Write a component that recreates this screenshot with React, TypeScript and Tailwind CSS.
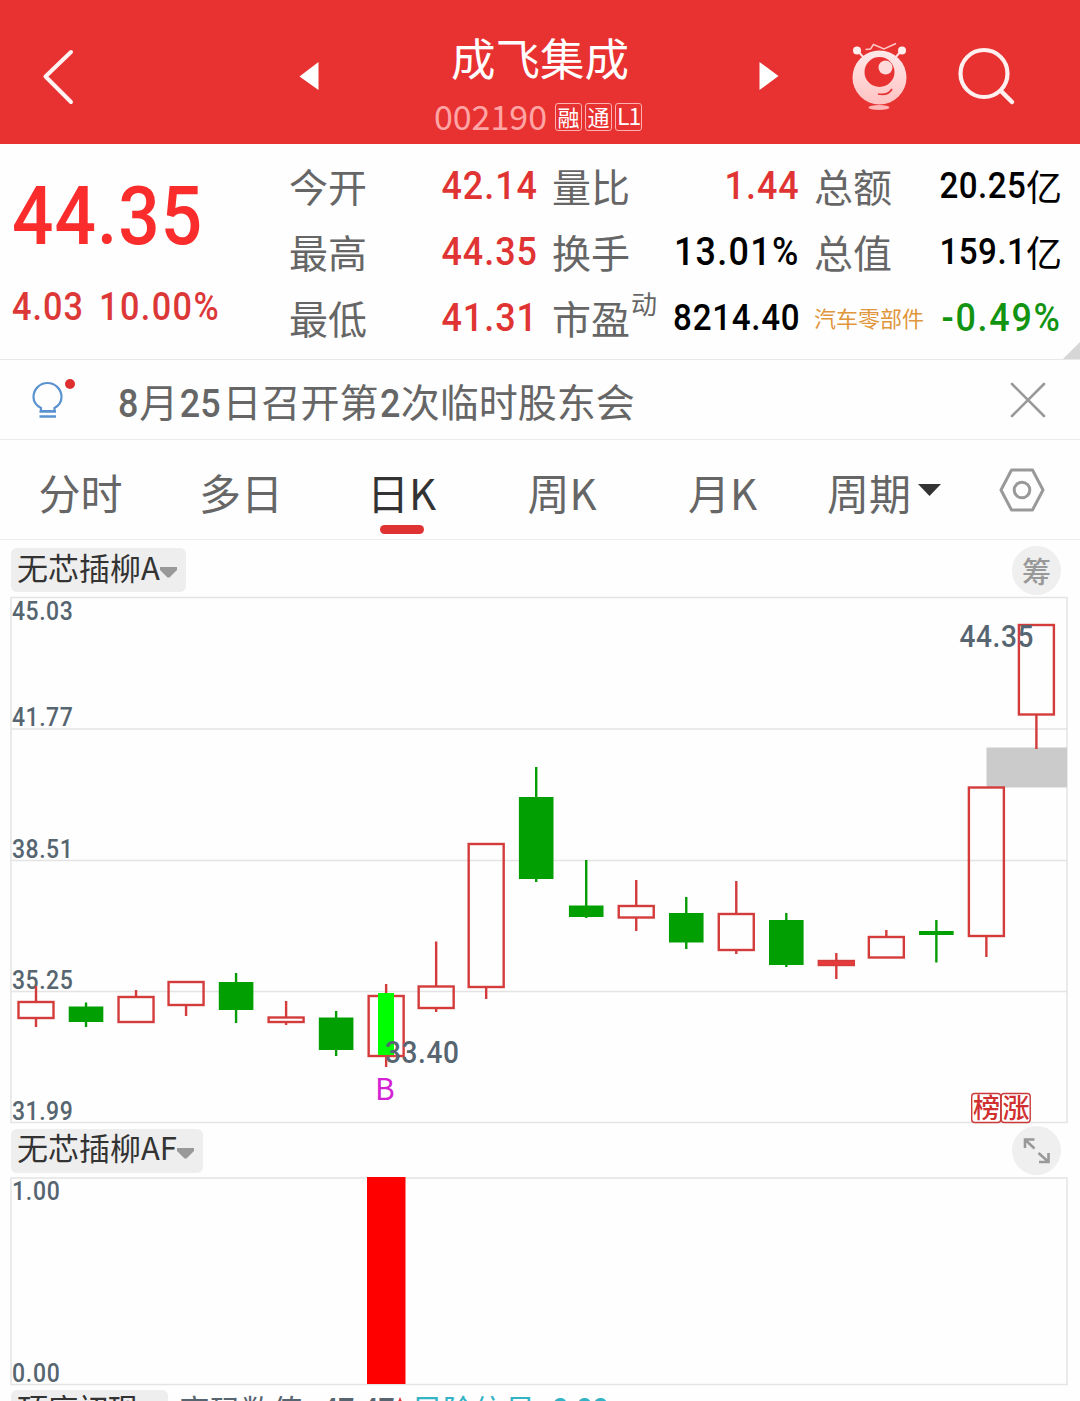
interface Quote {
  label: string
  sup?: string
  value: string
  unit?: string
  tone: string
  size: string
}

interface Candle {
  up: boolean
  top: number
  bottom: number
  high: number
  low: number
}

const quotes: Quote[] = [
  { label: '今开', value: '42.14', tone: 'text-[#e03434]', size: 'text-[39px] tracking-[1.1px]' },
  { label: '量比', value: '1.44', tone: 'text-[#e03434]', size: 'text-[39px] tracking-[1.1px]' },
  { label: '总额', value: '20.25', unit: '亿', tone: 'text-black', size: 'text-[36px] tracking-[0.5px]' },
  { label: '最高', value: '44.35', tone: 'text-[#e03434]', size: 'text-[39px] tracking-[1.1px]' },
  { label: '换手', value: '13.01%', tone: 'text-black', size: 'text-[39px] tracking-[1.4px]' },
  { label: '总值', value: '159.1', unit: '亿', tone: 'text-black', size: 'text-[36px] tracking-[0.5px]' },
  { label: '最低', value: '41.31', tone: 'text-[#e03434]', size: 'text-[39px] tracking-[1.1px]' },
  { label: '市盈', sup: '动', value: '8214.40', tone: 'text-black', size: 'text-[36px] tracking-[0.8px]' },
]

const tabs = [
  { name: '分时', width: 'w-[161px]' },
  { name: '多日', width: 'w-[160px]' },
  { name: '日K', width: 'w-[161px]', active: true },
  { name: '周K', width: 'w-[160px]' },
  { name: '月K', width: 'w-[161px]' },
]

// pixel rows inside the price panel
const candles: Candle[] = [
  { up: true, top: 1001, bottom: 1019, high: 986, low: 1027 },
  { up: false, top: 1006.5, bottom: 1022, high: 1002.5, low: 1027 },
  { up: true, top: 996, bottom: 1023, high: 990, low: 1023 },
  { up: true, top: 981, bottom: 1006, high: 981, low: 1016 },
  { up: false, top: 982, bottom: 1010, high: 973, low: 1023 },
  { up: true, top: 1016.5, bottom: 1023, high: 1001, low: 1025 },
  { up: false, top: 1017.5, bottom: 1050, high: 1011, low: 1056 },
  { up: true, top: 995, bottom: 1057, high: 984, low: 1067 },
  { up: true, top: 985.5, bottom: 1009, high: 941.5, low: 1012 },
  { up: true, top: 843, bottom: 988, high: 843, low: 999 },
  { up: false, top: 797, bottom: 879, high: 767, low: 882 },
  { up: false, top: 905.5, bottom: 917, high: 860, low: 918 },
  { up: true, top: 905, bottom: 918.5, high: 880, low: 931 },
  { up: false, top: 913, bottom: 942.5, high: 897, low: 949 },
  { up: true, top: 913, bottom: 951, high: 881, low: 954 },
  { up: false, top: 920, bottom: 965, high: 913, low: 967 },
  { up: true, top: 960, bottom: 966, high: 953, low: 979 },
  { up: true, top: 936, bottom: 958.5, high: 930, low: 958 },
  { up: false, top: 931, bottom: 935, high: 920, low: 962.5 },
  { up: true, top: 786.5, bottom: 937, high: 787, low: 957 },
  { up: true, top: 624, bottom: 715.5, high: 624, low: 749 },
]

const axis = [
  { text: '45.03', y: 620 },
  { text: '41.77', y: 726 },
  { text: '38.51', y: 858 },
  { text: '35.25', y: 989 },
  { text: '31.99', y: 1120 },
]

function Header() {
  return (
    <header className="relative flex h-36 justify-center bg-[#e83131] text-white">
      <div className="flex flex-col items-center pr-1">
        <h1 className="ml-1 mt-[35px] text-[44.5px] leading-[44px]">成飞集成</h1>
        <div className="mt-[19px] flex items-center">
          <span className="text-[34px] leading-9 text-[#ffa5a5]">002190</span>
          <div className="ml-2 mt-px flex gap-[3px] text-[22px]">
            <span className="flex h-7 w-[27px] items-center justify-center rounded-[3px] border border-[#ffb0b0] pb-[2px] leading-none">融</span>
            <span className="flex h-7 w-[27px] items-center justify-center rounded-[3px] border border-[#ffb0b0] pb-[2px] leading-none">通</span>
            <span className="flex h-7 w-[27px] items-center justify-center rounded-[3px] border border-[#ffb0b0] pb-[2px] text-[23px] leading-none tracking-[-1px]">L1</span>
          </div>
        </div>
      </div>
      <svg className="absolute inset-0" width="1080" height="144" viewBox="0 0 1080 144" fill="none">
        <defs>
          <linearGradient id="face" x1="0" y1="0" x2="0" y2="1">
            <stop offset="0" stopColor="#ffe9e9" />
            <stop offset="1" stopColor="#ffc2c2" />
          </linearGradient>
        </defs>
        <path d="M71 52 L45.5 76.5 L71 102" stroke="#fff2f2" strokeWidth="4" strokeLinecap="round" strokeLinejoin="round" />
        <path d="M299.500 76.500 L318.500 62 V90 Z" fill="#fff" />
        <path d="M778.500 76 L759.500 62 V90 Z" fill="#fff" />
        {/* mascot */}
        <path d="M858 51 L864 58 M901 51 L895 58" stroke="#ffe0e0" strokeWidth="2" />
        <circle cx="857" cy="50.500" r="4" fill="#fff0f0" />
        <circle cx="902" cy="50.500" r="4" fill="#fff0f0" />
        <path d="M865.500 49.500 L870.500 49 L873.500 44.500 L884 49 L896 43.500" stroke="#ffc6c6" strokeWidth="1.500" />
        <circle cx="879.500" cy="77.500" r="27" fill="url(#face)" />
        <circle cx="879.500" cy="72" r="15" fill="#e83131" />
        <circle cx="885.500" cy="67.500" r="7" fill="#ffdada" />
        <path d="M878 94 Q888 96 892 89" stroke="#e83131" strokeWidth="1.700" />
        <ellipse cx="879" cy="107.500" rx="10.500" ry="2.500" fill="#ffb5b5" />
        <circle cx="984" cy="73.500" r="23.500" stroke="#fff0f0" strokeWidth="4.200" />
        <path d="M1001 91 L1012 102" stroke="#fff0f0" strokeWidth="4.500" strokeLinecap="round" />
      </svg>
    </header>
  )
}

function QuotePanel() {
  return (
    <section className="relative flex h-[216px] border-b border-[#e8e8e8] pt-[10px]">
      <div className="w-[289px] pl-3 font-['Roboto',sans-serif] font-medium">
        <p className="mt-[23px] origin-left scale-x-90 text-[81px] leading-[80px] tracking-[1.2px] text-[#fa2c2c]">44.35</p>
        <p className="mt-[31px] flex gap-[7px] text-[38px] leading-[38px] text-[#dc3838]">
          <span className="origin-left scale-x-90 tracking-[1.2px]">4.03</span>
          <span className="origin-left scale-x-90 tracking-[1.6px]">10.00%</span>
        </p>
      </div>
      <div className="grid h-[198px] grid-cols-[249px_248px_248px] grid-rows-3 gap-x-[14px]">
        {quotes.map((q) => (
          <div key={q.label} className="flex items-center justify-between">
            <span className="-mt-1 flex text-[39px] leading-none text-[#666]">
              {q.label}
              {q.sup && <span className="-mt-2 ml-px text-[26px] leading-none">{q.sup}</span>}
            </span>
            <span className={`-mt-[2px] flex items-center leading-none ${q.size} ${q.tone}`}>
              <span className="origin-right scale-x-92 font-['Roboto',sans-serif] font-medium">{q.value}</span>
              {q.unit && <span className="-mt-[3px] tracking-normal">{q.unit}</span>}
            </span>
          </div>
        ))}
        <div className="flex items-center justify-between">
          <span className="-mt-1 text-[22px] leading-none text-[#e0963c]">汽车零部件</span>
          <span className="-mt-[2px] origin-right scale-x-92 font-['Roboto',sans-serif] text-[39px] font-medium leading-none tracking-[1.9px] text-[#129412]">-0.49%</span>
        </div>
      </div>
      <svg className="absolute bottom-0 right-0" width="17" height="17" viewBox="0 0 17 17">
        <path d="M17 0 V17 H0 Z" fill="#d6d6d6" />
      </svg>
    </section>
  )
}

function NewsBar() {
  return (
    <section className="flex h-20 items-center border-b border-[#ececec]">
      <svg className="ml-7" width="52" height="52" viewBox="28 374 52 52" fill="none">
        <path d="M41 411 V408 Q33.500 404 33.500 397 A14 14 0 0 1 61.500 397 Q61.500 404 54.500 408 V411 Z" stroke="#5b93cf" strokeWidth="2.200" />
        <path d="M39.500 411.500 H56 M39.500 416.500 H56" stroke="#5b93cf" strokeWidth="2.500" />
        <circle cx="70" cy="384" r="5" fill="#df3030" />
      </svg>
      <p className="ml-[37px] mt-[5px] text-[39px] leading-none text-[#666]">
        <Num>8</Num>月<Num>25</Num>日召开第<Num>2</Num>次临时股东会
      </p>
      <svg className="ml-auto mr-[34px]" width="36" height="36" viewBox="0 0 36 36">
        <path d="M2 2 L34 34 M34 2 L2 34" stroke="#999" strokeWidth="2.600" strokeLinecap="round" />
      </svg>
    </section>
  )
}

function Num({ children }: { children: string }) {
  return <span className="inline-block scale-x-92 font-['Roboto',sans-serif] font-medium leading-none">{children}</span>
}

function PeriodTabs() {
  return (
    <nav className="flex h-[100px] items-center border-b border-[#ececec] text-[42px] leading-none text-[#666]">
      {tabs.map((tab) => (
        <div key={tab.name} className={`flex h-full justify-center pt-[31px] ${tab.width}`}>
          <span className={tab.active ? 'relative h-[42px] text-[#333]' : 'h-[42px]'}>
            {tab.name}
            {tab.active && <i className="absolute left-1/2 top-[54px] ml-px h-[9px] w-[44px] -translate-x-1/2 rounded-full bg-[#df3232]" />}
          </span>
        </div>
      ))}
      <div className="ml-6 mt-[4px] flex items-center">
        周期
        <svg className="-mt-1 ml-[7px]" width="23" height="12" viewBox="0 0 23 12">
          <path d="M0 0 H23 L11.500 12 Z" fill="#333" />
        </svg>
      </div>
      <svg className="ml-[57px]" width="48" height="46" viewBox="0 0 48 46" fill="none" stroke="#999">
        <path d="M13.500 3 H34.500 L45 23 L34.500 43 H13.500 L3 23 Z" strokeWidth="3" strokeLinejoin="round" />
        <circle cx="24" cy="23" r="7.800" strokeWidth="3" />
      </svg>
    </nav>
  )
}

function IndicatorTag({ name }: { name: string }) {
  return (
    <span className="flex h-11 items-center rounded-md bg-[#eee] pl-[6px] pr-[9px] text-[31px] leading-none text-[#333]">
      <span className="-mt-2">{name}</span>
      <svg className="mt-1" width="17" height="12" viewBox="0 0 17 12">
        <path d="M0 1 H17 V4 L9.500 11.500 H7.500 L0 4 Z" fill="#999" />
      </svg>
    </span>
  )
}

function PriceChart() {
  return (
    <svg className="block" width="1080" height="530" viewBox="0 596 1080 530" fontFamily="Roboto, sans-serif" fontWeight="500">
      <g fill="none" stroke="#e4e4e4" strokeWidth="1.500">
        <rect x="11" y="597.500" width="1056" height="525" />
        <path d="M11 729 H1067 M11 860.500 H1067 M11 991.500 H1067" />
      </g>
      <rect x="986.500" y="747.500" width="80.500" height="40" fill="#cbcbcb" />
      <g fontSize="25" fill="#566570" transform="translate(12 0) scale(0.92 1)">
        {axis.map((a) => (
          <text key={a.text} x="0" y={a.y} textLength="66">
            {a.text}
          </text>
        ))}
      </g>
      {candles.map((c, i) => {
        const x = 36 + i * 50.02
        const color = c.up ? '#d43c3c' : '#069c06'
        return (
          <g key={i} stroke={color} strokeWidth="2.400">
            <path d={`M${x} ${c.high} V${c.top + 1} M${x} ${c.bottom - 1} V${c.low}`} />
            {c.up ? (
              <rect x={x - 17.5} y={c.top + 1} width="35" height={c.bottom - c.top - 2} fill="none" />
            ) : (
              <rect x={x - 17.3} y={c.top} width="34.600" height={c.bottom - c.top} fill="#029f02" stroke="none" />
            )}
          </g>
        )
      })}
      <path d="M819 963 H854" stroke="#e83a3a" strokeWidth="3" />
      <rect x="378" y="993" width="16" height="62" fill="#00ff00" />
      <g fontSize="30.500" fill="#566570">
        <text transform="translate(385 1063) scale(0.92 1)" textLength="80.500">33.40</text>
        <text transform="translate(959.500 647) scale(0.92 1)" textLength="80.500">44.35</text>
      </g>
      <text x="375" y="1100" fontSize="30" fontWeight="400" fontFamily="Noto Sans CJK SC, sans-serif" fill="#d41fd4">B</text>
      <g fill="#fff" stroke="#c93a3a" strokeWidth="1.400">
        <rect x="971.700" y="1093.500" width="29" height="29" rx="3" />
        <rect x="1001.200" y="1093.500" width="29" height="29" rx="3" />
      </g>
      <g fontSize="27" fill="#d03030" fontFamily="Noto Sans CJK SC, sans-serif">
        <text x="973" y="1118">榜</text>
        <text x="1002.500" y="1118">涨</text>
      </g>
    </svg>
  )
}

function SignalChart() {
  return (
    <svg className="block" width="1080" height="210" viewBox="0 1176 1080 210" fontFamily="Roboto, sans-serif" fontWeight="500">
      <rect x="11" y="1178" width="1056" height="206.500" fill="none" stroke="#e4e4e4" strokeWidth="1.500" />
      <rect x="367" y="1177" width="38.500" height="207" fill="#ff0000" />
      <g fontSize="25" fill="#566570" transform="translate(12 0) scale(0.92 1)">
        <text x="0" y="1200" textLength="52">1.00</text>
        <text x="0" y="1382" textLength="52">0.00</text>
      </g>
    </svg>
  )
}

export default function App() {
  return (
    <div className="h-[1401px] w-[1080px] overflow-hidden bg-[#fefefe] font-['Noto_Sans_CJK_SC',sans-serif]">
      <Header />
      <QuotePanel />
      <NewsBar />
      <PeriodTabs />
      <div className="flex h-14 items-center justify-between pl-[11px] pr-[19px] pt-1">
        <IndicatorTag name="无芯插柳A" />
        <span className="flex size-[49px] items-center justify-center rounded-full bg-[#efefef] text-[29px] font-medium leading-none text-[#999]">筹</span>
      </div>
      <PriceChart />
      <div className="flex h-[49px] items-center justify-between pl-[11px] pr-[19px]">
        <IndicatorTag name="无芯插柳AF" />
        <svg width="49" height="49" viewBox="0 0 49 49" fill="none">
          <circle cx="24.500" cy="24.500" r="24.500" fill="#efefef" />
          <path d="M13 22 V13.500 H22.500 M13.500 14 L22.500 22.500 M36.500 27 V36 H27 M36 35.500 L26.500 27" stroke="#999" strokeWidth="2.600" />
        </svg>
      </div>
      <div className="pt-px">
        <SignalChart />
      </div>
      <div className="flex items-start pl-[11px] pt-1 text-[31px] leading-none">
        <span className="h-11 w-[157px] rounded-md bg-[#eee] pl-[6px] pt-[2px] tracking-[-0.8px] text-[#333]">顶底初现</span>
        <span className="ml-[11px] pt-[3px] text-[#566570]">密码数值:</span>
        <span className="ml-[10px] origin-left scale-x-92 pt-1 font-['Roboto',sans-serif] font-medium text-[#566570]">47.47</span>
        <span className="-ml-[9px] flex pt-[3px]">
          <svg className="mt-1" width="16" height="24" viewBox="0 0 16 24">
            <path d="M8 0 L13 12 H3 Z" fill="#e03434" />
          </svg>
          <span className="ml-1 text-[#34b3c4]">风险信号:</span>
          <span className="ml-2 origin-left scale-x-92 pt-px font-['Roboto',sans-serif] font-medium text-[#34b3c4]">0.00</span>
        </span>
      </div>
    </div>
  )
}
